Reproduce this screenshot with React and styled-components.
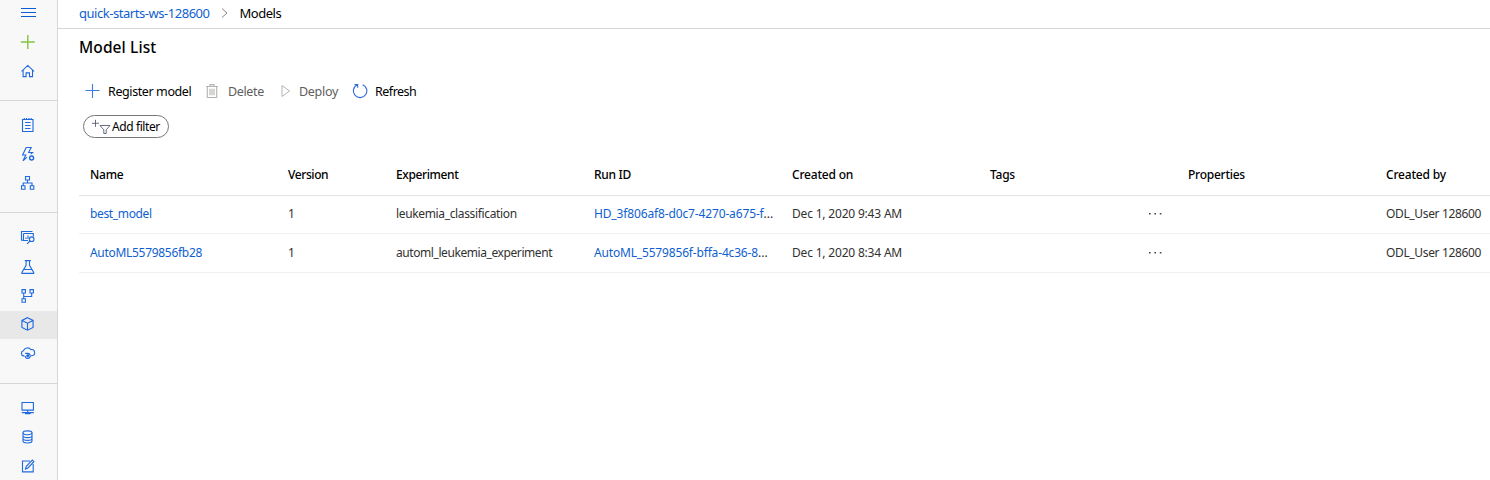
import React from "react";
import styled, { createGlobalStyle } from "styled-components";

const Global = createGlobalStyle`
  * { box-sizing: border-box; }
  html, body { margin: 0; padding: 0; background: #fff; overflow: hidden; }
  body { font-family: "Noto Sans", "Open Sans", sans-serif; font-size: 12px; color: #000; }
`;

const Page = styled.div`
  display: flex;
  width: 1490px;
  height: 480px;
  overflow: hidden;
`;

const Sidebar = styled.nav`
  width: 58px;
  flex: none;
  background: #f8f8f8;
  border-right: 1px solid #d6d6d6;
  display: flex;
  flex-direction: column;
`;

const NavGroup = styled.div`
  flex: none;
  height: ${(p) => p.$height}px;
  padding-top: ${(p) => p.$top}px;
  border-bottom: 1px solid #d6d6d6;
`;

const NavItem = styled.a`
  display: flex;
  align-items: center;
  justify-content: center;
  height: ${(p) => p.$height || 29}px;
  padding: 0 1px ${(p) => p.$lift || 0}px 0;
  background: ${(p) => (p.$active ? "#e8e8e8" : "transparent")};
`;

const Icon = styled.svg.attrs((p) => ({
  width: p.$width || 16,
  height: 16,
  viewBox: `0 0 ${p.$width || 16} 16`,
}))`
  display: block;
  flex: none;
  fill: none;
  stroke: ${(p) => p.$color || "#1f69dd"};
  stroke-width: ${(p) => p.$weight || 1.1};
`;

const Main = styled.main`
  flex: 1;
  min-width: 0;
  display: flex;
  flex-direction: column;
`;

const Breadcrumb = styled.header`
  height: 29px;
  flex: none;
  display: flex;
  align-items: center;
  padding: 0 0 2px 21px;
  border-bottom: 1px solid #d6d6d6;
`;

const Label = styled.span`
  font-size: ${(p) => p.$size || 12}px;
  letter-spacing: ${(p) => p.$spacing || 0}px;
  font-weight: ${(p) => p.$weight || 400};
  color: ${(p) => p.$color || "#000"};
  line-height: 18px;
  white-space: nowrap;
`;

const Chevron = styled(Icon)`
  margin: 0 8px 0 6px;
`;

const Title = styled.h1`
  margin: 7px 0 0 21px;
  height: 22px;
  font-size: 15.5px;
  line-height: 22px;
  font-weight: 500;
  letter-spacing: 0.1px;
`;

const Toolbar = styled.div`
  display: flex;
  align-items: center;
  height: 24px;
  margin: 21px 0 0 27px;
`;

const Command = styled.button`
  display: flex;
  align-items: center;
  gap: ${(p) => p.$gap}px;
  width: ${(p) => p.$width}px;
  padding: 0;
  border: 0;
  background: none;
  font-family: inherit;

  ${Label} {
    padding-top: 2px;
  }
`;

const FilterButton = styled.button`
  display: flex;
  align-items: center;
  width: 86px;
  height: 23px;
  margin: 12px 0 0 25px;
  padding: 0 0 0 7px;
  gap: 1px;
  border: 1px solid #767676;
  border-radius: 12px;
  background: #fff;
  font-family: inherit;
`;

const Table = styled.div`
  margin: 17px 0 0 21px;
`;

const Row = styled.div`
  display: grid;
  grid-template-columns: 198px 108px 198px 198px 198px 198px 198px 115px;
  align-items: center;
  height: ${(p) => p.$height}px;
  padding-bottom: ${(p) => p.$lift || 0}px;
  border-bottom: 1px solid ${(p) => (p.$head ? "#e3e3e3" : "#f1f1f1")};
`;

const Cell = styled.div`
  display: flex;
  padding: 0 15px 0 11px;
  min-width: 0;
  white-space: nowrap;
  justify-content: ${(p) => (p.$end ? "flex-end" : "flex-start")};
`;

const Dots = styled.svg`
  display: block;
  fill: #444;
`;

const MenuIcon = () => <Icon $color="#0b5cd6" $weight="1.2"><path d="M1 3.5h15M1 7.5h15M1 11.5h15" /></Icon>;
const AddIcon = () => <Icon $color="#84c341" $weight="1.4"><path d="M7.8 1v14M.8 8h14" /></Icon>;
const HomeIcon = () => <Icon><path d="M1.6 8.4 7.8 2.4l6.2 6M3.1 7.2v6.4h3V9.9h3.4v3.7h3V7.2" /></Icon>;
const NotebookIcon = () => <Icon><path d="M2.5 2.5h10.5v12H2.5zM4.3 1v2M6.6 1v2M8.9 1v2M11.2 1v2M5.1 5.5h5.4M5.1 8.5h5.4M5.1 11.5h5.4" /></Icon>;
const AutoIcon = () => <Icon><path d="M6.2 1.5h5L8.6 6.5h4l-1.8 1.6M6.2 1.5 2.6 9h3.2L3 14.8l4-3.6" /><circle cx="11.6" cy="12" r="2" strokeWidth="1.4" /></Icon>;
const DesignerIcon = () => <Icon><path d="M5.5 1.5h4v3.5h-4zM1.5 10.8H5v3.4H1.5zM10.3 10.8h3.5v3.4h-3.5zM7.5 5v3M3.2 10.8V8h8.8v2.8" /></Icon>;
const DatasetIcon = () => <Icon><path d="M3 11.3H1.5V2.5h11M3.5 4.5h9.8v3M3.5 4.5v7h4.5M6 10V8.4M8 10V6.6" /><circle cx="11.7" cy="10.2" r="2.3" /><path d="m10 12-3 2.8" /></Icon>;
const FlaskIcon = () => <Icon><path d="M4.8 1.6h6M6.1 1.8v4.6l-4.2 7v1h11.8v-1l-4.2-7V1.8M4 10.5h7.6" /></Icon>;
const PipelineIcon = () => <Icon><path d="M2 1.6h3.4V5H2zM10 1.6h3.4V5H10zM2 10.8h3.4v3.4H2zM3.7 5v5.8M3.7 8.5h8V5" /></Icon>;
const CubeIcon = () => <Icon><path d="m7.5 1.7 5.6 2.7v7l-5.6 2.8-5.6-2.8v-7zM1.9 4.4l5.6 2.8 5.6-2.8M7.5 7.2v7" /></Icon>;
const CloudIcon = () => <Icon><path d="M4.5 10.9H3.6A2.6 2.6 0 0 1 3.4 5.8 4.4 4.4 0 0 1 11 4.6a3.1 3.1 0 0 1 1 6.2h-1.2" /><path d="M5.2 8.4h2.4a2.5 2.5 0 1 1-2.4 2.6" /><circle cx="7.7" cy="10.7" r=".9" fill="#1f69dd" /></Icon>;
const ComputeIcon = () => <Icon><path d="M2 2.5h11.4v7.6H2zM7.7 10.2v2.4M1.8 12.6h12M5 13.8h5.6" /></Icon>;
const DatastoreIcon = () => <Icon><ellipse cx="7.5" cy="3.8" rx="4.5" ry="1.9" /><path d="M3 3.8v8.3c0 2.6 9 2.6 9 0V3.8M3 6.7c0 2.5 9 2.5 9 0M3 9.5c0 2.5 9 2.5 9 0" /></Icon>;
const LabelingIcon = () => <Icon><path d="M10 3H2.5v10.9h10.7V6M5.5 11l.8-2.7 6-6.2 1.6 1.6-6 6.3z" /></Icon>;

const COLUMNS = [
  ["Name", -0.25], ["Version", -0.4], ["Experiment", -0.38], ["Run ID", -0.3],
  ["Created on", -0.2], ["Tags", -0.25], ["Properties", -0.25], ["Created by", -0.2],
];

const ROWS = [
  { name: "best_model", nameSpacing: -0.35, experiment: "leukemia_classification", expSpacing: -0.35, run: "HD_3f806af8-d0c7-4270-a675-f", runSpacing: -0.14, date: "Dec 1, 2020 9:43 AM", height: 38, lift: 2 },
  { name: "AutoML5579856fb28", nameSpacing: -0.3, experiment: "automl_leukemia_experiment", expSpacing: -0.42, run: "AutoML_5579856f-bffa-4c36-8", runSpacing: -0.17, date: "Dec 1, 2020 8:34 AM", height: 39, lift: 0 },
];

const LINK = "#0f5fd0";
const TEXT = "#323130";

const Text = ({ link, spacing = -0.35, children }) => (
  <Label $color={link ? LINK : TEXT} $spacing={spacing}>{children}</Label>
);

const More = () => (
  <Dots width="14" height="4" viewBox="0 0 14 4">
    <path d="M1 1h1.6v1.6H1zM6.4 1H8v1.6H6.4zM11.8 1h1.6v1.6h-1.6z" />
  </Dots>
);

export default function App() {
  return (
    <Page>
      <Global />
      <Sidebar>
        <NavGroup $height={101} $top={0}>
          <NavItem $height={26}><MenuIcon /></NavItem>
          <NavItem $height={32}><AddIcon /></NavItem>
          <NavItem $height={26}><HomeIcon /></NavItem>
        </NavGroup>
        <NavGroup $height={112} $top={10}>
          <NavItem $lift={1}><NotebookIcon /></NavItem>
          <NavItem $lift={1}><AutoIcon /></NavItem>
          <NavItem $lift={1}><DesignerIcon /></NavItem>
        </NavGroup>
        <NavGroup $height={171} $top={10}>
          <NavItem $lift={1}><DatasetIcon /></NavItem>
          <NavItem $height={30}><FlaskIcon /></NavItem>
          <NavItem $lift={1}><PipelineIcon /></NavItem>
          <NavItem $height={28} $lift={2} $active><CubeIcon /></NavItem>
          <NavItem $lift={1}><CloudIcon /></NavItem>
        </NavGroup>
        <NavGroup $height={112} $top={10}>
          <NavItem $lift={1}><ComputeIcon /></NavItem>
          <NavItem $lift={1}><DatastoreIcon /></NavItem>
          <NavItem $lift={1}><LabelingIcon /></NavItem>
        </NavGroup>
      </Sidebar>
      <Main>
        <Breadcrumb>
          <Label $size={13} $spacing={-0.46} $color={LINK}>quick-starts-ws-128600</Label>
          <Chevron $color="#8a8886" $weight="1"><path d="m6 3.5 5 4.5-5 4.5" /></Chevron>
          <Label $size={13} $spacing={-0.5}>Models</Label>
        </Breadcrumb>
        <Title>Model List</Title>
        <Toolbar>
          <Command $width={119} $gap={7}>
            <Icon $color="#3f7be0" $weight="1.1"><path d="M7.5 1v14M.5 7.5h14" /></Icon>
            <Label $size={12.5} $spacing={-0.4}>Register model</Label>
          </Command>
          <Command $width={73} $gap={8}>
            <Icon $color="#b5b3b1" $weight="1.1"><path d="M2 3.5h12M6 3.3V1.6h4v1.7M3.3 3.5v11h9.4v-11M6 5.7v6.6M8 5.7v6.6M10 5.7v6.6" /></Icon>
            <Label $size={12.5} $spacing={-0.35} $color="#605e5c">Delete</Label>
          </Command>
          <Command $width={75} $gap={6}>
            <Icon $color="#b5b3b1" $weight="1"><path d="M5 2.5v11L12.5 8z" /></Icon>
            <Label $size={12.5} $spacing={-0.3} $color="#605e5c">Deploy</Label>
          </Command>
          <Command $width={80} $gap={7}>
            <Icon $color="#3268d8" $weight="1.1"><path d="M10.6 1.7A6.7 6.7 0 1 1 5 2M2.5 1.6h3.2v3.2" /></Icon>
            <Label $size={12.5} $spacing={-0.5}>Refresh</Label>
          </Command>
        </Toolbar>
        <FilterButton>
          <Icon $width={20} $color="#555b78" $weight="0.9">
            <path d="M4.5 0.8v7M1 4.3h7M9 6.5h10l-3.8 4.3v3.7h-2.4v-3.7z" />
          </Icon>
          <Label $spacing={-0.4}>Add filter</Label>
        </FilterButton>
        <Table>
          <Row $head $height={41}>
            {COLUMNS.map(([name, spacing]) => (
              <Cell key={name}><Label $weight={500} $spacing={spacing}>{name}</Label></Cell>
            ))}
          </Row>
          {ROWS.map((r) => (
            <Row key={r.name} $height={r.height} $lift={r.lift}>
              <Cell><Text link spacing={r.nameSpacing}>{r.name}</Text></Cell>
              <Cell><Text>1</Text></Cell>
              <Cell><Text spacing={r.expSpacing}>{r.experiment}</Text></Cell>
              <Cell><Text link spacing={r.runSpacing}>{r.run}</Text><Text spacing={0}>...</Text></Cell>
              <Cell><Text spacing={-0.19}>{r.date}</Text></Cell>
              <Cell $end><More /></Cell>
              <Cell />
              <Cell><Text>ODL_User 128600</Text></Cell>
            </Row>
          ))}
        </Table>
      </Main>
    </Page>
  );
}
